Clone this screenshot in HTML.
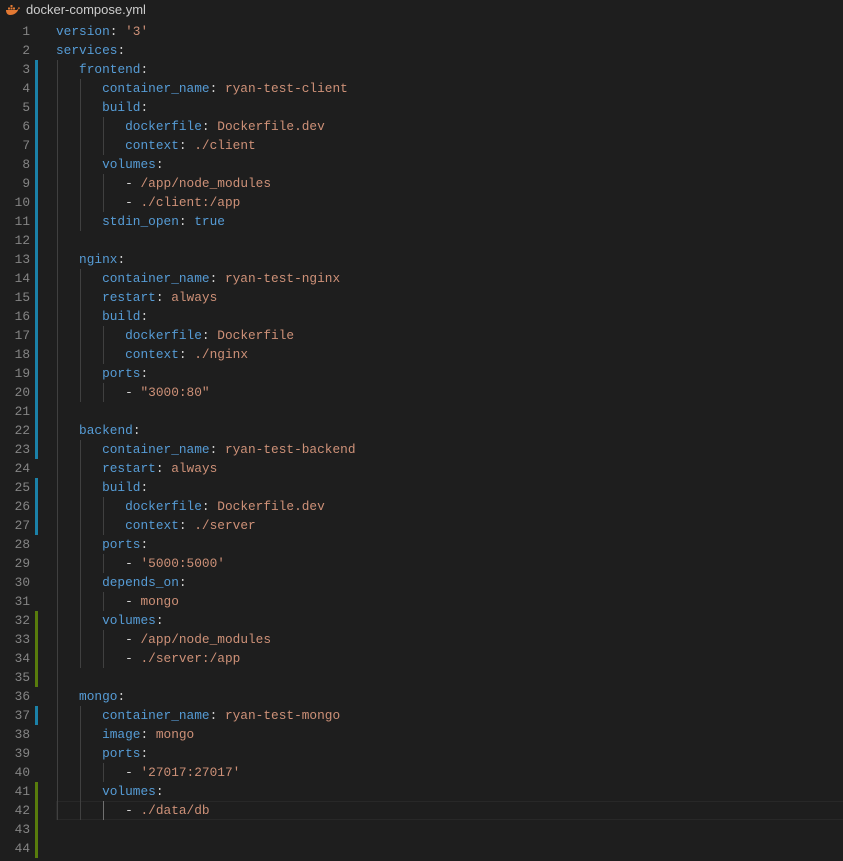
<!DOCTYPE html>
<html><head><meta charset="utf-8"><style>
body{margin:0;width:843px;height:861px;background:#1e1e1e;overflow:hidden;position:relative;font-family:"Liberation Mono",monospace;}
.tab{position:absolute;left:26px;top:2px;font:13px "Liberation Sans",sans-serif;color:#cccccc;}
.ln{position:absolute;left:0;width:30px;text-align:right;color:#858585;font-size:12.8px;line-height:19px;}
.code{position:absolute;left:56px;white-space:pre;font-size:12.8px;line-height:19px;color:#d4d4d4;}
.k{color:#569cd6}.s{color:#ce9178}
.g{position:absolute;width:1px;background:#404040}
.b{position:absolute;left:35px;width:3px;background:#1b81a8}
.gr{position:absolute;left:35px;width:3px;background:#587c0c}
.cur{position:absolute;left:56px;right:0;top:801px;height:17px;border:1px solid #282828;border-right:none}
</style></head><body>
<svg style="position:absolute;left:5px;top:4px" width="16" height="12" viewBox="0 0 16 12"><path d="M1 6h11c1-1 1.5-2 1.5-3 .8.2 1.5.8 1.5 1.5-.6.3-1 .3-1.5.3C12.5 9 9 11 5 11 2.5 11 1 9 1 6z" fill="#e37933"/><rect x="3" y="3.5" width="2" height="2" fill="#e37933"/><rect x="5.5" y="3.5" width="2" height="2" fill="#e37933"/><rect x="8" y="3.5" width="2" height="2" fill="#e37933"/><rect x="5.5" y="1" width="2" height="2" fill="#e37933"/></svg>
<div class="tab">docker-compose.yml</div>
<div class="cur"></div>
<div class="b" style="top:60px;height:399px"></div>
<div class="b" style="top:478px;height:57px"></div>
<div class="b" style="top:706px;height:19px"></div>
<div class="gr" style="top:611px;height:76px"></div>
<div class="gr" style="top:782px;height:76px"></div>
<div class="g" style="left:57px;top:60px;height:760px"></div>
<div class="g" style="left:80px;top:79px;height:152px"></div>
<div class="g" style="left:80px;top:269px;height:133px"></div>
<div class="g" style="left:80px;top:440px;height:228px"></div>
<div class="g" style="left:80px;top:706px;height:114px"></div>
<div class="g" style="left:103px;top:117px;height:38px"></div>
<div class="g" style="left:103px;top:174px;height:38px"></div>
<div class="g" style="left:103px;top:326px;height:38px"></div>
<div class="g" style="left:103px;top:383px;height:19px"></div>
<div class="g" style="left:103px;top:497px;height:38px"></div>
<div class="g" style="left:103px;top:554px;height:19px"></div>
<div class="g" style="left:103px;top:592px;height:19px"></div>
<div class="g" style="left:103px;top:630px;height:38px"></div>
<div class="g" style="left:103px;top:763px;height:19px"></div>
<div class="g" style="left:103px;top:801px;height:19px;background:#707070"></div>
<div class="ln" style="top:22px">1<br>2<br>3<br>4<br>5<br>6<br>7<br>8<br>9<br>10<br>11<br>12<br>13<br>14<br>15<br>16<br>17<br>18<br>19<br>20<br>21<br>22<br>23<br>24<br>25<br>26<br>27<br>28<br>29<br>30<br>31<br>32<br>33<br>34<br>35<br>36<br>37<br>38<br>39<br>40<br>41<br>42<br>43<br>44</div>
<div class="code" style="top:22px"><span class="k">version</span>: <span class="s">'3'</span>
<span class="k">services</span>:
   <span class="k">frontend</span>:
      <span class="k">container_name</span>: <span class="s">ryan-test-client</span>
      <span class="k">build</span>:
         <span class="k">dockerfile</span>: <span class="s">Dockerfile.dev</span>
         <span class="k">context</span>: <span class="s">./client</span>
      <span class="k">volumes</span>:
         - <span class="s">/app/node_modules</span>
         - <span class="s">./client:/app</span>
      <span class="k">stdin_open</span>: <span class="k">true</span>

   <span class="k">nginx</span>:
      <span class="k">container_name</span>: <span class="s">ryan-test-nginx</span>
      <span class="k">restart</span>: <span class="s">always</span>
      <span class="k">build</span>:
         <span class="k">dockerfile</span>: <span class="s">Dockerfile</span>
         <span class="k">context</span>: <span class="s">./nginx</span>
      <span class="k">ports</span>:
         - <span class="s">"3000:80"</span>

   <span class="k">backend</span>:
      <span class="k">container_name</span>: <span class="s">ryan-test-backend</span>
      <span class="k">restart</span>: <span class="s">always</span>
      <span class="k">build</span>:
         <span class="k">dockerfile</span>: <span class="s">Dockerfile.dev</span>
         <span class="k">context</span>: <span class="s">./server</span>
      <span class="k">ports</span>:
         - <span class="s">'5000:5000'</span>
      <span class="k">depends_on</span>:
         - <span class="s">mongo</span>
      <span class="k">volumes</span>:
         - <span class="s">/app/node_modules</span>
         - <span class="s">./server:/app</span>

   <span class="k">mongo</span>:
      <span class="k">container_name</span>: <span class="s">ryan-test-mongo</span>
      <span class="k">image</span>: <span class="s">mongo</span>
      <span class="k">ports</span>:
         - <span class="s">'27017:27017'</span>
      <span class="k">volumes</span>:
         - <span class="s">./data/db</span>
</div>
</body></html>
